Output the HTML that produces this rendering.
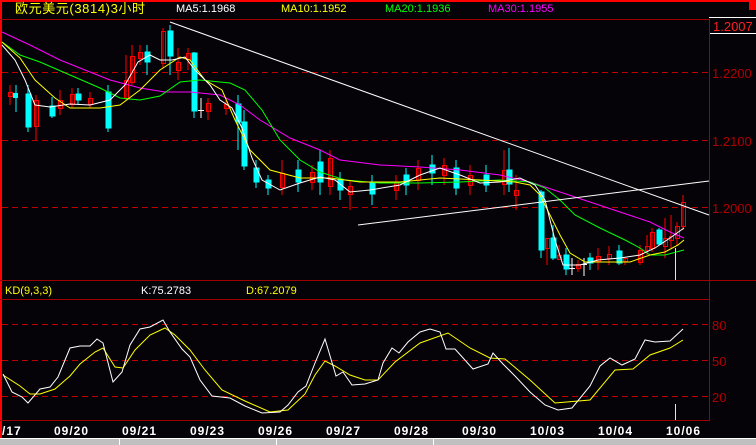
<!DOCTYPE html>
<html><head><meta charset="utf-8"><style>
html,body{margin:0;padding:0;background:#050308;width:756px;height:445px;overflow:hidden}
svg{display:block}
text{font-family:"Liberation Sans","Noto Sans CJK SC",sans-serif}
</style></head><body>
<svg width="756" height="445" viewBox="0 0 756 445" xmlns="http://www.w3.org/2000/svg">
<rect width="756" height="445" fill="#050308"/>
<rect x="0" y="0" width="756" height="2" fill="#ff0000"/>
<rect x="0" y="0" width="2" height="438" fill="#ff0000"/>
<rect x="749" y="0" width="7" height="10" fill="#ff0000"/>
<g stroke="#a00000" stroke-width="1" fill="none">
<line x1="0" y1="19.5" x2="709" y2="19.5"/>
<line x1="709.5" y1="19" x2="709.5" y2="421"/>
<line x1="0" y1="280.5" x2="756" y2="280.5"/>
<line x1="0" y1="299.5" x2="709" y2="299.5"/>
<line x1="0" y1="420.5" x2="709" y2="420.5"/>
</g>
<g stroke="#c00000" stroke-width="1" stroke-dasharray="6,4">
<line x1="2" y1="72.5" x2="709" y2="72.5"/>
<line x1="2" y1="140.5" x2="709" y2="140.5"/>
<line x1="2" y1="207.5" x2="709" y2="207.5"/>
<line x1="2" y1="324.5" x2="709" y2="324.5"/>
<line x1="2" y1="360.5" x2="709" y2="360.5"/>
<line x1="2" y1="396.5" x2="709" y2="396.5"/>
</g>
<line x1="709" y1="17.5" x2="756" y2="17.5" stroke="#fff"/>
<line x1="710" y1="33.5" x2="756" y2="33.5" stroke="#fff"/>
<g font-size="13" fill="#b00000">
<text x="713" y="31" fill="#ff2020">1.2007</text>
<text x="712" y="78">1.2200</text>
<text x="712" y="146">1.2100</text>
<text x="712" y="213">1.2000</text>
<text x="712" y="330">80</text>
<text x="712" y="366">50</text>
<text x="712" y="402">20</text>
</g>
<g font-size="11">
<text x="15" y="13" fill="#ffff00" font-size="13" style="letter-spacing:0.6px">欧元美元(3814)3小时</text>
<text x="176" y="12" fill="#ffffff">MA5:1.1968</text>
<text x="281" y="12" fill="#ffff00">MA10:1.1952</text>
<text x="385" y="12" fill="#00ff00">MA20:1.1936</text>
<text x="488" y="12" fill="#ff00ff">MA30:1.1955</text>
<text x="5" y="294" fill="#ffff00">KD(9,3,3)</text>
<text x="141" y="294" fill="#ffffff">K:75.2783</text>
<text x="246" y="294" fill="#ffff00">D:67.2079</text>
</g>
<g stroke-width="1">
<g stroke="#ff0000" fill="none">
<line x1="10" y1="85" x2="10" y2="105"/><rect x="8.5" y="92.5" width="4" height="4"/>
<line x1="36" y1="95" x2="36" y2="140"/><rect x="34.5" y="100.5" width="4" height="26"/>
<line x1="60" y1="90" x2="60" y2="115"/><rect x="58.5" y="100.5" width="4" height="8"/>
<line x1="72" y1="88" x2="72" y2="108"/><rect x="70.5" y="94.5" width="4" height="10"/>
<line x1="90" y1="92" x2="90" y2="108"/><rect x="88.5" y="98.5" width="4" height="6"/>
<line x1="126" y1="55" x2="126" y2="100"/><rect x="124.5" y="80.5" width="4" height="18"/>
<line x1="132" y1="45" x2="132" y2="85"/><rect x="130.5" y="56.5" width="4" height="26"/>
<line x1="140" y1="45" x2="140" y2="65"/><rect x="138.5" y="52.5" width="4" height="6"/>
<line x1="163" y1="28" x2="163" y2="68"/><rect x="161.5" y="31.5" width="4" height="32"/>
<line x1="178" y1="48" x2="178" y2="80"/><rect x="176.5" y="62.5" width="4" height="8"/>
<line x1="188" y1="48" x2="188" y2="70"/><rect x="186.5" y="53.5" width="4" height="6"/>
<line x1="208" y1="98" x2="208" y2="120"/><rect x="206.5" y="103.5" width="4" height="8"/>
<line x1="226" y1="100" x2="226" y2="115"/><rect x="224.5" y="104.5" width="4" height="4"/>
<line x1="282" y1="160" x2="282" y2="195"/><rect x="280.5" y="173.5" width="4" height="14"/>
<line x1="312" y1="165" x2="312" y2="190"/><rect x="310.5" y="172.5" width="4" height="10"/>
<line x1="330" y1="150" x2="330" y2="195"/><rect x="328.5" y="158.5" width="4" height="28"/>
<line x1="350" y1="180" x2="350" y2="210"/><rect x="348.5" y="186.5" width="4" height="8"/>
<line x1="396" y1="175" x2="396" y2="200"/><rect x="394.5" y="182.5" width="4" height="8"/>
<line x1="418" y1="160" x2="418" y2="190"/><rect x="416.5" y="168.5" width="4" height="12"/>
<line x1="444" y1="158" x2="444" y2="185"/><rect x="442.5" y="165.5" width="4" height="10"/>
<line x1="470" y1="165" x2="470" y2="195"/><rect x="468.5" y="175.5" width="4" height="10"/>
<line x1="504" y1="150" x2="504" y2="195"/><rect x="502.5" y="170.5" width="4" height="14"/>
<line x1="516" y1="175" x2="516" y2="210"/><rect x="514.5" y="190.5" width="4" height="5"/>
<line x1="547" y1="238" x2="547" y2="265"/><rect x="545.5" y="238.5" width="4" height="10"/>
<line x1="559" y1="245" x2="559" y2="260"/><rect x="557.5" y="255.5" width="4" height="4"/>
<line x1="578" y1="260" x2="578" y2="272"/><rect x="576.5" y="264.5" width="4" height="4"/>
<line x1="598" y1="248" x2="598" y2="270"/><rect x="596.5" y="256.5" width="4" height="5"/>
<line x1="609" y1="246" x2="609" y2="265"/><rect x="607.5" y="254.5" width="4" height="4"/>
<line x1="625" y1="258" x2="625" y2="265"/><rect x="623.5" y="258.5" width="4" height="3"/>
<line x1="640" y1="245" x2="640" y2="265"/><rect x="638.5" y="250.5" width="4" height="12"/>
<line x1="647" y1="235" x2="647" y2="255"/><rect x="645.5" y="246.5" width="4" height="4"/>
<line x1="652" y1="228" x2="652" y2="252"/><rect x="650.5" y="232.5" width="4" height="16"/>
<line x1="665" y1="218" x2="665" y2="258"/><rect x="663.5" y="238.5" width="4" height="8"/>
<line x1="671" y1="215" x2="671" y2="248"/><rect x="669.5" y="236.5" width="4" height="4"/>
<line x1="677" y1="222" x2="677" y2="245"/><rect x="675.5" y="226.5" width="4" height="12"/>
<line x1="683" y1="195" x2="683" y2="230"/><rect x="681.5" y="202.5" width="4" height="24"/>
</g>
<g stroke="#00ffff" fill="#00ffff">
<line x1="16" y1="85" x2="16" y2="112"/><rect x="13.5" y="93.5" width="4" height="4"/>
<line x1="28" y1="85" x2="28" y2="132"/><rect x="26" y="94" width="5" height="33"/>
<line x1="52" y1="97" x2="52" y2="118"/><rect x="50" y="106" width="5" height="10"/>
<line x1="78" y1="88" x2="78" y2="104"/><rect x="76" y="94" width="5" height="6"/>
<line x1="108" y1="85" x2="108" y2="132"/><rect x="106" y="92" width="5" height="36"/>
<line x1="147" y1="45" x2="147" y2="75"/><rect x="145" y="52" width="5" height="10"/>
<line x1="170" y1="25" x2="170" y2="75"/><rect x="168" y="31" width="5" height="25"/>
<line x1="194" y1="52" x2="194" y2="118"/><rect x="192" y="53" width="5" height="58"/>
<line x1="238" y1="95" x2="238" y2="150"/><rect x="236" y="104" width="5" height="18"/>
<line x1="244" y1="110" x2="244" y2="170"/><rect x="242" y="122" width="5" height="44"/>
<line x1="256" y1="160" x2="256" y2="188"/><rect x="254" y="168" width="5" height="14"/>
<line x1="268" y1="175" x2="268" y2="195"/><rect x="266" y="180" width="5" height="8"/>
<line x1="298" y1="160" x2="298" y2="192"/><rect x="296" y="170" width="5" height="12"/>
<line x1="320" y1="150" x2="320" y2="195"/><rect x="318" y="162" width="5" height="20"/>
<line x1="340" y1="172" x2="340" y2="200"/><rect x="338" y="180" width="5" height="10"/>
<line x1="372" y1="175" x2="372" y2="205"/><rect x="370" y="182" width="5" height="12"/>
<line x1="406" y1="168" x2="406" y2="195"/><rect x="404" y="175" width="5" height="10"/>
<line x1="432" y1="155" x2="432" y2="185"/><rect x="430" y="165" width="5" height="8"/>
<line x1="456" y1="160" x2="456" y2="195"/><rect x="454" y="168" width="5" height="20"/>
<line x1="486" y1="165" x2="486" y2="192"/><rect x="484" y="175" width="5" height="10"/>
<line x1="509" y1="148" x2="509" y2="192"/><rect x="507" y="170" width="5" height="14"/>
<line x1="541" y1="190" x2="541" y2="258"/><rect x="539" y="192" width="5" height="58"/>
<line x1="553" y1="225" x2="553" y2="260"/><rect x="551" y="238" width="5" height="20"/>
<line x1="566" y1="248" x2="566" y2="275"/><rect x="564" y="255" width="5" height="14"/>
<line x1="590" y1="253" x2="590" y2="270"/><rect x="588" y="258" width="5" height="5"/>
<line x1="619" y1="245" x2="619" y2="265"/><rect x="617" y="251" width="5" height="12"/>
<line x1="659" y1="228" x2="659" y2="245"/><rect x="657" y="230" width="5" height="14"/>
</g>
<g stroke="#ffffff"><line x1="201" y1="98" x2="201" y2="118"/><line x1="198" y1="110.5" x2="204" y2="110.5"/>
<line x1="572" y1="258" x2="572" y2="275"/><line x1="569" y1="268.5" x2="575" y2="268.5"/>
<line x1="584" y1="258" x2="584" y2="276"/><line x1="581" y1="264.5" x2="587" y2="264.5"/></g>
</g>
<g fill="none" stroke-width="1">
<polyline stroke="#ff00ff" points="2,32 30,45 60,60 80,68 110,80 140,88 165,92 190,92 220,95 240,105 260,120 290,138 320,150 340,160 380,165 420,167 460,170 500,175 530,182 560,192 590,202 620,212 650,222 670,232 684,238"/>
<polyline stroke="#00ff00" points="2,42 20,55 40,62 70,75 100,88 120,98 140,100 160,96 180,82 200,80 230,83 245,90 262,110 280,140 300,160 320,172 345,180 380,183 420,183 460,182 500,180 530,182 545,188 560,200 575,215 600,228 625,240 640,248 650,255 665,255 684,250"/>
<polyline stroke="#ffff00" points="2,42 20,58 35,80 55,98 70,108 100,108 120,105 140,90 160,70 180,57 190,60 205,80 222,90 235,120 250,150 270,170 300,178 330,178 360,182 400,182 440,178 480,180 515,182 530,185 540,195 550,215 560,235 570,253 585,262 610,262 630,262 650,255 665,252 678,245 684,240"/>
<polyline stroke="#ffffff" points="2,45 15,60 25,80 35,105 50,107 70,104 90,105 110,100 125,85 138,62 150,55 160,60 172,60 185,57 195,70 210,85 220,100 232,108 242,128 252,158 262,180 280,190 300,183 320,177 335,180 350,192 370,190 400,185 420,175 440,168 460,175 480,183 500,182 520,178 535,185 545,200 555,240 563,265 580,265 598,260 620,258 640,255 655,248 670,238 684,228"/>
<line x1="170" y1="22" x2="709" y2="215" stroke="#ffffff"/>
<line x1="358" y1="225" x2="709" y2="181" stroke="#ffffff"/>
<line x1="675.5" y1="248" x2="675.5" y2="280" stroke="#ffff00"/>
<line x1="675.5" y1="404" x2="675.5" y2="420" stroke="#ffff00"/>
<polyline stroke="#ffff00" points="3,375 20,386 30,394 40,394 55,389 70,376 80,364 95,352 103,348 115,367 123,368 135,350 150,335 165,328 175,335 190,350 205,370 222,390 245,401 270,412 288,410 305,394 315,375 325,361 335,366 350,375 365,380 378,380 395,362 420,343 448,333 470,348 490,358 505,359 530,380 555,403 590,400 615,370 633,369 650,355 670,348 683,340"/>
<polyline stroke="#ffffff" points="3,374 12,392 22,397 28,403 40,389 50,387 58,377 70,348 80,346 90,346 97,339 103,343 113,382 122,372 130,345 140,329 150,327 163,320 170,332 182,349 190,357 200,380 212,396 230,398 245,406 262,413 280,412 288,405 298,392 306,386 315,363 325,339 336,376 343,372 352,385 365,384 378,380 383,363 392,348 399,353 408,342 420,332 430,329 440,332 446,349 455,349 473,369 488,364 493,353 503,364 515,376 530,392 545,405 558,410 572,408 590,386 600,366 610,358 622,365 635,359 645,340 655,342 670,341 683,329"/>
</g>
<g font-size="12" font-weight="bold" fill="#ffffff" font-family="Liberation Mono, monospace" style="letter-spacing:1px">
<text x="2" y="435">/17</text>
<text x="54" y="435">09/20</text>
<text x="122" y="435">09/21</text>
<text x="190" y="435">09/23</text>
<text x="258" y="435">09/26</text>
<text x="326" y="435">09/27</text>
<text x="394" y="435">09/28</text>
<text x="462" y="435">09/30</text>
<text x="530" y="435">10/03</text>
<text x="598" y="435">10/04</text>
<text x="666" y="435">10/06</text>
</g>
<rect x="0" y="438" width="756" height="7" fill="#c0c0c0"/>
<line x1="0" y1="438.5" x2="756" y2="438.5" stroke="#ffffff"/>
<line x1="119.5" y1="439" x2="119.5" y2="445" stroke="#fff"/>
<line x1="276.5" y1="439" x2="276.5" y2="445" stroke="#fff"/>
<line x1="433.5" y1="439" x2="433.5" y2="445" stroke="#fff"/>
</svg>
</body></html>
